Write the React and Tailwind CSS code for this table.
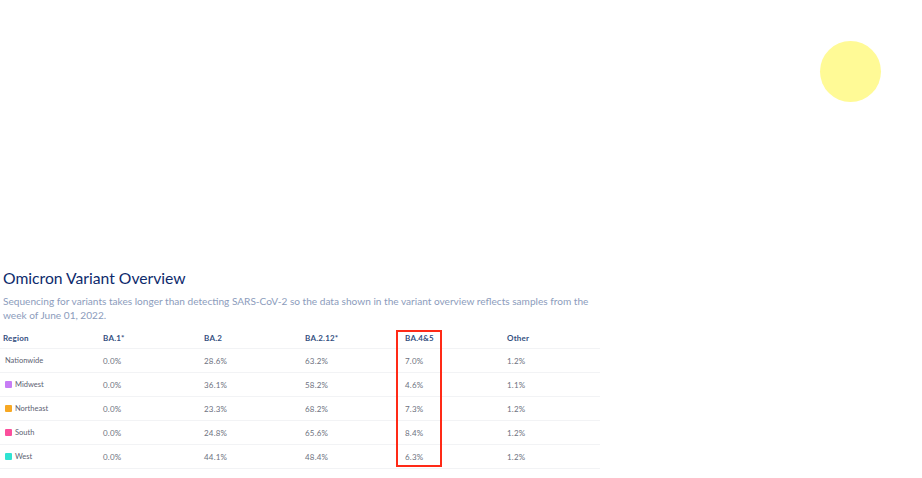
import React from 'react';

const columns = ['Region', 'BA.1*', 'BA.2', 'BA.2.12*', 'BA.4&5', 'Other'];

const rows = [
  { name: 'Nationwide', swatch: null, values: ['0.0%', '28.6%', '63.2%', '7.0%', '1.2%'] },
  { name: 'Midwest', swatch: 'bg-[#c77df5]', values: ['0.0%', '36.1%', '58.2%', '4.6%', '1.1%'] },
  { name: 'Northeast', swatch: 'bg-[#f7a823]', values: ['0.0%', '23.3%', '68.2%', '7.3%', '1.2%'] },
  { name: 'South', swatch: 'bg-[#fb4f9c]', values: ['0.0%', '24.8%', '65.6%', '8.4%', '1.2%'] },
  { name: 'West', swatch: 'bg-[#2fe3d2]', values: ['0.0%', '44.1%', '48.4%', '6.3%', '1.2%'] },
];

const cols = 'grid grid-cols-[100px_101px_101px_100px_102px_1fr]';

export default function App() {
  return (
    <div className="relative w-[922px] h-[478px] bg-white overflow-hidden font-['Lato','Liberation_Sans',sans-serif]">
      <div className="absolute left-[820px] top-[41px] w-[61px] h-[61px] rounded-full bg-[#fffa96]" />

      <div className="pt-[268px] pl-[3px] w-[600px]">
        <h2 className="text-[15.7px] leading-[20px] text-[#0d2a6c]">
          Omicron Variant Overview
        </h2>
        <p className="mt-[6px] w-[598px] text-[10.1px] leading-[14px] text-[#8c9cbc]">
          Sequencing for variants takes longer than detecting SARS-CoV-2 so the data shown in the variant overview reflects samples from the week of June 01, 2022.
        </p>

        <div className="relative mt-[5px] -ml-[3px] w-[600px]">
          <div className={`${cols} h-[22px] items-center border-b border-[#f2f3f5] pl-[3px]`}>
            {columns.map((c) => (
              <div key={c} className="text-[8px] font-bold text-[#34507f] tracking-[0.2px]">
                {c}
              </div>
            ))}
          </div>
          {rows.map((r) => (
            <div key={r.name} className={`${cols} h-[24px] items-center border-b border-[#f2f3f5] pl-[3px]`}>
              <div className="flex items-center gap-[3px] pl-[2px] text-[7.5px] text-[#5c6272]">
                {r.swatch && <span className={`w-[7px] h-[7px] rounded-[1px] ${r.swatch}`} />}
                <span>{r.name}</span>
              </div>
              {r.values.map((v, i) => (
                <div key={i} className="text-[8px] text-[#6d7280] tracking-[0.2px]">
                  {v}
                </div>
              ))}
            </div>
          ))}

          <div className="absolute left-[396px] top-[3px] w-[46px] h-[137px] border-2 border-[#ff2a17]" />
        </div>
      </div>
    </div>
  );
}
